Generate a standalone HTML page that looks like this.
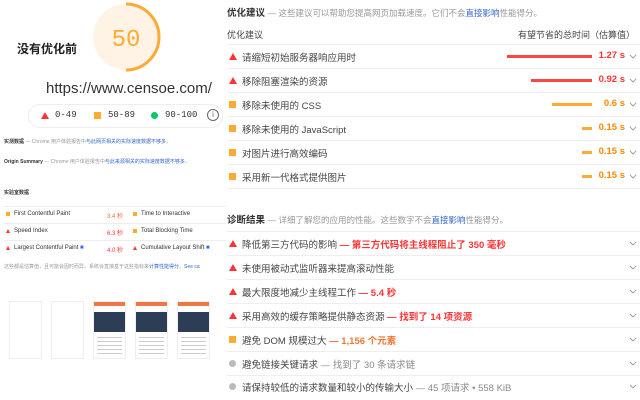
<!DOCTYPE html>
<html><head><meta charset="utf-8"><style>
*{margin:0;padding:0;box-sizing:border-box}
body{width:640px;height:400px;overflow:hidden;background:#fff;font-family:"Liberation Sans","Noto Sans CJK SC",sans-serif;color:#333;position:relative}
.a{position:absolute;white-space:nowrap}
.tri{position:absolute;width:0;height:0;border-left:4px solid transparent;border-right:4px solid transparent;border-bottom:7px solid #f33}
.sq{position:absolute;width:7px;height:7px;background:#fa3}
.dot{position:absolute;width:7px;height:7px;border-radius:50%;background:#bbb}
.row{position:absolute;left:227px;width:413px;border-top:1px solid #eee}
.t{position:absolute;left:242px;font-size:9.5px;color:#444;white-space:nowrap}
.bar{position:absolute;height:3px}
.v{position:absolute;right:15px;font-size:9.5px;font-weight:bold;white-space:nowrap}
.ch{position:absolute;left:631px;width:6px;height:4px}
.tiny{font-size:5px;color:#999}
.m{position:absolute;font-size:6px;color:#333;white-space:nowrap}
.fr{position:absolute;top:301px;width:33px;height:58px;border:1px solid #eee;background:#fff}
.ln{height:1px;background:#ccc;margin:3px 3px 0}
</style></head><body>
<div class="a" style="left:17px;top:40px;font-size:12px;font-weight:bold;color:#222">没有优化前</div>
<svg class="a" style="left:90px;top:1px" width="74" height="72"><circle cx="36" cy="36" r="33" fill="#fff3e6"/><path d="M36 3 A33 33 0 0 1 36 69" fill="none" stroke="#fa3" stroke-width="3"/><text x="36" y="45" text-anchor="middle" font-family="Liberation Mono,monospace" font-size="24" fill="#fa3">50</text></svg>
<div class="a" style="left:46px;top:80px;font-size:15px;color:#333">https://www.censoe.com/</div>
<div class="a" style="left:28px;top:104px;width:195px;height:24px;border:1px solid #eee;border-radius:12px"></div>
<div class="tri" style="left:41px;top:112px"></div>
<div class="a" style="left:55px;top:110px;font-family:'Liberation Mono',monospace;font-size:9px">0-49</div>
<div class="sq" style="left:94px;top:112px"></div>
<div class="a" style="left:108px;top:110px;font-family:'Liberation Mono',monospace;font-size:9px">50-89</div>
<div class="dot" style="left:151px;top:112px;background:#0c6"></div>
<div class="a" style="left:165px;top:110px;font-family:'Liberation Mono',monospace;font-size:9px">90-100</div>
<div class="a" style="left:207px;top:109px;width:12px;height:12px;border:1px solid #666;border-radius:50%;font-size:8px;text-align:center;line-height:10px;color:#666">i</div>
<div class="a" style="left:4px;top:138px;font-size:5px"><b>实测数据</b> <span class="tiny">— Chrome 用户体验报告中<span style="color:#36c">与此网页相关的实际速度数据不够多</span>。</span></div>
<div class="a" style="left:4px;top:158px;font-size:5px"><b>Origin Summary</b> <span class="tiny">— Chrome 用户体验报告中<span style="color:#36c">与此来源相关的实际速度数据不够多</span>。</span></div>
<div class="a" style="left:4px;top:189px;font-size:5px;font-weight:bold">实验室数据</div>
<div class="a" style="left:4px;top:206px;width:222px;border-top:1px solid #eee"></div>
<div class="a" style="left:4px;top:223px;width:222px;border-top:1px solid #eee"></div>
<div class="a" style="left:4px;top:240px;width:222px;border-top:1px solid #eee"></div>
<div class="sq" style="left:6px;top:212px;width:4px;height:4px"></div><div class="m" style="left:14px;top:211px">First Contentful Paint</div><div class="m" style="left:107px;top:211px;color:#f63">3.4 秒</div>
<div class="sq" style="left:133px;top:212px;width:4px;height:4px"></div><div class="m" style="left:141px;top:211px">Time to Interactive</div>
<div class="tri" style="left:6px;top:229px;border-width:0 2px 4px 2px"></div><div class="m" style="left:14px;top:228px">Speed Index</div><div class="m" style="left:107px;top:228px;color:#f33">6.3 秒</div>
<div class="sq" style="left:133px;top:229px;width:4px;height:4px"></div><div class="m" style="left:141px;top:228px">Total Blocking Time</div>
<div class="tri" style="left:6px;top:246px;border-width:0 2px 4px 2px"></div><div class="m" style="left:14px;top:245px">Largest Contentful Paint <span style="color:#36f">■</span></div><div class="m" style="left:107px;top:245px;color:#f33">4.0 秒</div>
<div class="tri" style="left:133px;top:246px;border-width:0 2px 4px 2px"></div><div class="m" style="left:141px;top:245px">Cumulative Layout Shift <span style="color:#36f">■</span></div>
<div class="a tiny" style="left:4px;top:263px">这些都是估算值，且可能会因时而异。系统会直接基于这些指标来<span style="color:#36c">计算性能得分</span>。<span style="color:#36c">See ca</span></div>
<div class="fr" style="left:9px"></div><div class="fr" style="left:51px"></div>
<div class="fr" style="left:93px"><div style="height:4px;background:#e74"></div><div style="margin-top:6px;height:20px;background:#2c3e55"></div><div class="ln" style="margin-top:5px"></div><div class="ln"></div><div class="ln"></div><div class="ln"></div><div class="ln"></div></div>
<div class="fr" style="left:135px"><div style="height:4px;background:#e74"></div><div style="margin-top:6px;height:20px;background:#2c3e55"></div><div class="ln" style="margin-top:5px"></div><div class="ln"></div><div class="ln"></div><div class="ln"></div><div class="ln"></div></div>
<div class="fr" style="left:177px"><div style="height:4px;background:#e74"></div><div style="margin-top:6px;height:20px;background:#2c3e55"></div><div class="ln" style="margin-top:5px"></div><div class="ln"></div><div class="ln"></div><div class="ln"></div><div class="ln"></div></div>

<div class="a" style="left:227px;top:5px;font-size:9.5px"><b>优化建议</b> <span style="color:#999;font-size:8.5px">— 这些建议可以帮助您提高网页加载速度。它们不会<span style="color:#36c">直接影响</span>性能得分。</span></div>
<div class="a" style="left:227px;top:28px;font-size:9px;color:#444">优化建议</div>
<div class="a" style="left:518px;top:28px;font-size:9px;color:#444">有望节省的总时间（估算值）</div>
<div class="row" style="top:44px"></div><div class="row" style="top:68px"></div><div class="row" style="top:92px"></div><div class="row" style="top:116px"></div><div class="row" style="top:140px"></div><div class="row" style="top:164px"></div><div class="row" style="top:188px"></div>
<div class="tri" style="left:229px;top:53px"></div><div class="t" style="top:50px">请缩短初始服务器响应用时</div><div class="bar" style="left:507px;width:85px;top:55px;background:#f44"></div><div class="v" style="top:50px;color:#f33">1.27 s</div>
<div class="tri" style="left:229px;top:77px"></div><div class="t" style="top:74px">移除阻塞渲染的资源</div><div class="bar" style="left:531px;width:61px;top:79px;background:#f44"></div><div class="v" style="top:74px;color:#f33">0.92 s</div>
<div class="sq" style="left:229px;top:101px"></div><div class="t" style="top:98px">移除未使用的 CSS</div><div class="bar" style="left:552px;width:40px;top:103px;background:#fa3"></div><div class="v" style="top:98px;color:#f80">0.6 s</div>
<div class="sq" style="left:229px;top:125px"></div><div class="t" style="top:122px">移除未使用的 JavaScript</div><div class="bar" style="left:582px;width:10px;top:127px;background:#fa3"></div><div class="v" style="top:122px;color:#f80">0.15 s</div>
<div class="sq" style="left:229px;top:149px"></div><div class="t" style="top:146px">对图片进行高效编码</div><div class="bar" style="left:582px;width:10px;top:151px;background:#fa3"></div><div class="v" style="top:146px;color:#f80">0.15 s</div>
<div class="sq" style="left:229px;top:173px"></div><div class="t" style="top:170px">采用新一代格式提供图片</div><div class="bar" style="left:582px;width:10px;top:175px;background:#fa3"></div><div class="v" style="top:170px;color:#f80">0.15 s</div>

<div class="a" style="left:227px;top:212px;font-size:9.5px"><b>诊断结果</b> <span style="color:#999;font-size:8.5px">— 详细了解您的应用的性能。这些数字不会<span style="color:#36c">直接影响</span>性能得分。</span></div>
<div class="row" style="top:231px"></div><div class="row" style="top:255px"></div><div class="row" style="top:279px"></div><div class="row" style="top:303px"></div><div class="row" style="top:327px"></div><div class="row" style="top:351px"></div><div class="row" style="top:375px"></div>
<div class="tri" style="left:229px;top:240px"></div><div class="t" style="top:237px">降低第三方代码的影响 <b style="color:#f33">— 第三方代码将主线程阻止了 350 毫秒</b></div>
<div class="tri" style="left:229px;top:264px"></div><div class="t" style="top:261px">未使用被动式监听器来提高滚动性能</div>
<div class="tri" style="left:229px;top:288px"></div><div class="t" style="top:285px">最大限度地减少主线程工作 <b style="color:#f33">— 5.4 秒</b></div>
<div class="tri" style="left:229px;top:312px"></div><div class="t" style="top:309px">采用高效的缓存策略提供静态资源 <b style="color:#f33">— 找到了 14 项资源</b></div>
<div class="sq" style="left:229px;top:336px"></div><div class="t" style="top:333px">避免 DOM 规模过大 <b style="color:#e73">— 1,156 个元素</b></div>
<div class="dot" style="left:229px;top:360px"></div><div class="t" style="top:357px">避免链接关键请求 <span style="color:#888">— 找到了 30 条请求链</span></div>
<div class="dot" style="left:229px;top:383px"></div><div class="t" style="top:380px">请保持较低的请求数量和较小的传输大小 <span style="color:#888">— 45 项请求 • 558 KiB</span></div>

<svg class="a" style="left:0;top:0" width="640" height="400">
<g fill="none" stroke="#999" stroke-width="0.9">
<path d="M630 55l3 3 3-3"/><path d="M630 79l3 3 3-3"/><path d="M630 103l3 3 3-3"/><path d="M630 127l3 3 3-3"/><path d="M630 151l3 3 3-3"/><path d="M630 175l3 3 3-3"/>
<path d="M630 242l3 3 3-3"/><path d="M630 266l3 3 3-3"/><path d="M630 290l3 3 3-3"/><path d="M630 314l3 3 3-3"/><path d="M630 338l3 3 3-3"/><path d="M630 362l3 3 3-3"/><path d="M630 385l3 3 3-3"/>
</g></svg>
</body></html>
